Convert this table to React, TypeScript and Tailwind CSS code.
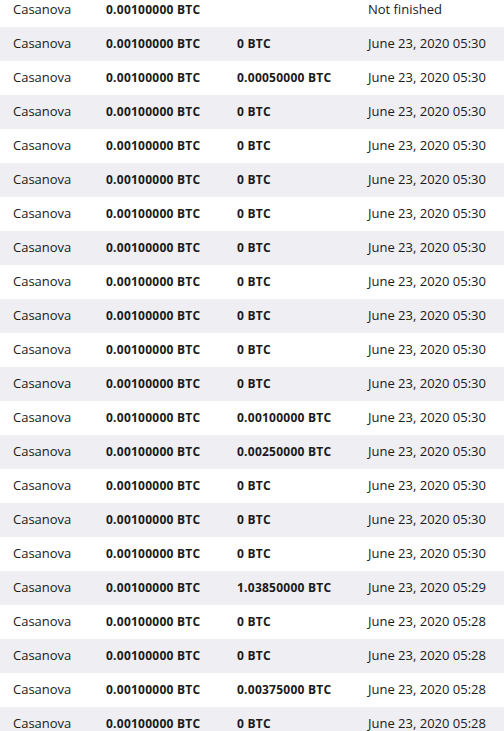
import React from "react";

type Row = { win: string; date: string };

const rows: Row[] = [
  { win: "", date: "Not finished" },
  { win: "0 BTC", date: "June 23, 2020 05:30" },
  { win: "0.00050000 BTC", date: "June 23, 2020 05:30" },
  { win: "0 BTC", date: "June 23, 2020 05:30" },
  { win: "0 BTC", date: "June 23, 2020 05:30" },
  { win: "0 BTC", date: "June 23, 2020 05:30" },
  { win: "0 BTC", date: "June 23, 2020 05:30" },
  { win: "0 BTC", date: "June 23, 2020 05:30" },
  { win: "0 BTC", date: "June 23, 2020 05:30" },
  { win: "0 BTC", date: "June 23, 2020 05:30" },
  { win: "0 BTC", date: "June 23, 2020 05:30" },
  { win: "0 BTC", date: "June 23, 2020 05:30" },
  { win: "0.00100000 BTC", date: "June 23, 2020 05:30" },
  { win: "0.00250000 BTC", date: "June 23, 2020 05:30" },
  { win: "0 BTC", date: "June 23, 2020 05:30" },
  { win: "0 BTC", date: "June 23, 2020 05:30" },
  { win: "0 BTC", date: "June 23, 2020 05:30" },
  { win: "1.03850000 BTC", date: "June 23, 2020 05:29" },
  { win: "0 BTC", date: "June 23, 2020 05:28" },
  { win: "0 BTC", date: "June 23, 2020 05:28" },
  { win: "0.00375000 BTC", date: "June 23, 2020 05:28" },
  { win: "0 BTC", date: "June 23, 2020 05:28" },
];

export default function App() {
  return (
    <div
      className="w-[504px] h-[731px] overflow-hidden bg-white text-[#1a1a1a]"
      style={{ fontFamily: '"Open Sans", "Liberation Sans", sans-serif' }}
    >
      <div className="-mt-[7px]">
        {rows.map((r, i) => (
          <div
            key={i}
            className={`flex items-center h-[34px] ${i % 2 === 1 ? "bg-[#eeeef3]" : "bg-white"}`}
          >
            <div className="w-[106px] pl-[13px] text-[13px]">Casanova</div>
            <div className="w-[131px] text-[12px] font-bold tracking-[0.25px]">0.00100000 BTC</div>
            <div className="w-[131px] text-[12px] font-bold tracking-[0.25px]">{r.win}</div>
            <div className="flex-1 text-[13px]">{r.date}</div>
          </div>
        ))}
      </div>
    </div>
  );
}
